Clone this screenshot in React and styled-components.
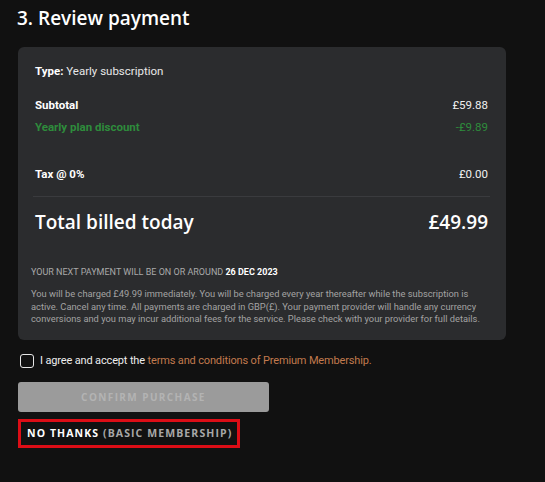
import React, { useState } from "react";
import styled, { createGlobalStyle } from "styled-components";

const GlobalStyle = createGlobalStyle`
  html, body {
    margin: 0;
    padding: 0;
    background: #111111;
  }
  body {
    font-family: Roboto, "Liberation Sans", sans-serif;
    color: #ffffff;
  }
`;

const Page = styled.div`
  width: 545px;
  height: 482px;
  background: #111111;
  padding: 0 39px 0 18px;
  box-sizing: border-box;
  overflow: hidden;
`;

const Title = styled.h2`
  margin: 0 0 0 -1px;
  padding: 5px 0 0 0;
  font-family: "Open Sans", sans-serif;
  font-weight: 600;
  font-size: 19px;
  line-height: 26px;
  color: #ffffff;
`;

const Card = styled.div`
  margin-top: 16px;
  background: #2b2c2e;
  border-radius: 6px;
  padding: 16px 18px 14px 17px;
`;

const TypeLine = styled.div`
  font-size: 11.5px;
  line-height: 16px;
  color: #e8e8e8;

  b {
    font-weight: 700;
    color: #ffffff;
  }
`;

const Row = styled.div`
  display: flex;
  justify-content: space-between;
  align-items: center;
  font-size: 11.5px;
  line-height: 16px;
  margin-top: ${(p) => p.$top || 0}px;
  color: ${(p) => (p.$green ? "#2e8c3c" : "#f0f0f0")};
`;

const Label = styled.span`
  font-weight: ${(p) => (p.$bold ? 700 : 400)};
  color: ${(p) => (p.$green ? "#2e8c3c" : "#ffffff")};
`;

const Divider = styled.div`
  height: 1px;
  background: #3a3b3e;
  margin: 14px -2px 0 -2px;
`;

const TotalRow = styled.div`
  display: flex;
  justify-content: space-between;
  align-items: center;
  margin-top: 12px;
  font-family: "Open Sans", sans-serif;
  font-weight: 600;
  font-size: 19px;
  line-height: 26px;
  color: #ffffff;
`;

const NextPayment = styled.div`
  margin: 31px 0 0 -4px;
  font-size: 9px;
  line-height: 12px;
  color: #a9a9a9;
  text-transform: uppercase;

  b {
    color: #ffffff;
    font-weight: 700;
  }
`;

const Fine = styled.p`
  margin: 10px 0 0 -4px;
  font-size: 9.3px;
  line-height: 12.5px;
  color: #a3a3a3;
`;

const AgreeRow = styled.label`
  display: flex;
  align-items: center;
  gap: 6px;
  margin-top: 13px;
  padding-left: 2px;
  font-size: 11px;
  letter-spacing: -0.15px;
  line-height: 16px;
  color: #ededed;
  cursor: pointer;
`;

const Box = styled.span`
  width: 12px;
  height: 12px;
  border: 1.5px solid #e6e6e6;
  border-radius: 3px;
  flex-shrink: 0;
  background: ${(p) => (p.$on ? "#c8784a" : "transparent")};
`;

const Link = styled.span`
  color: #c27a4e;
`;

const Confirm = styled.button`
  display: block;
  margin-top: 13px;
  width: 251px;
  height: 30px;
  border: none;
  border-radius: 3px;
  background: #9b9b9b;
  color: #b3b3b3;
  font-family: "Open Sans", sans-serif;
  font-weight: 700;
  font-size: 10px;
  letter-spacing: 1.4px;
  text-transform: uppercase;
`;

const NoThanks = styled.button`
  display: block;
  margin-top: 7px;
  width: 222px;
  height: 29px;
  box-sizing: border-box;
  border: 3px solid #dc0d16;
  background: transparent;
  padding: 0 0 0 6px;
  text-align: left;
  font-family: "Open Sans", sans-serif;
  font-weight: 700;
  font-size: 10.5px;
  letter-spacing: 1.1px;
  color: #ffffff;

  span {
    color: #a8a8a8;
  }
`;

export default function App() {
  const [agreed, setAgreed] = useState(false);

  return (
    <Page>
      <GlobalStyle />
      <Title>3. Review payment</Title>
      <Card>
        <TypeLine>
          <b>Type:</b> Yearly subscription
        </TypeLine>
        <Row $top={18}>
          <Label $bold>Subtotal</Label>
          <span>£59.88</span>
        </Row>
        <Row $top={6} $green>
          <Label $bold $green>Yearly plan discount</Label>
          <span>-£9.89</span>
        </Row>
        <Row $top={31}>
          <Label $bold>Tax @ 0%</Label>
          <span>£0.00</span>
        </Row>
        <Divider />
        <TotalRow>
          <span>Total billed today</span>
          <span>£49.99</span>
        </TotalRow>
        <NextPayment>
          Your next payment will be on or around <b>26 DEC 2023</b>
        </NextPayment>
        <Fine>
          You will be charged £49.99 immediately. You will be charged every year
          thereafter while the subscription is active. Cancel any time. All
          payments are charged in GBP(£). Your payment provider will handle any
          currency conversions and you may incur additional fees for the
          service. Please check with your provider for full details.
        </Fine>
      </Card>
      <AgreeRow onClick={() => setAgreed(!agreed)}>
        <Box $on={agreed} />
        <span>
          I agree and accept the{" "}
          <Link>terms and conditions of Premium Membership.</Link>
        </span>
      </AgreeRow>
      <Confirm disabled={!agreed}>Confirm purchase</Confirm>
      <NoThanks>
        NO THANKS <span>(BASIC MEMBERSHIP)</span>
      </NoThanks>
    </Page>
  );
}
